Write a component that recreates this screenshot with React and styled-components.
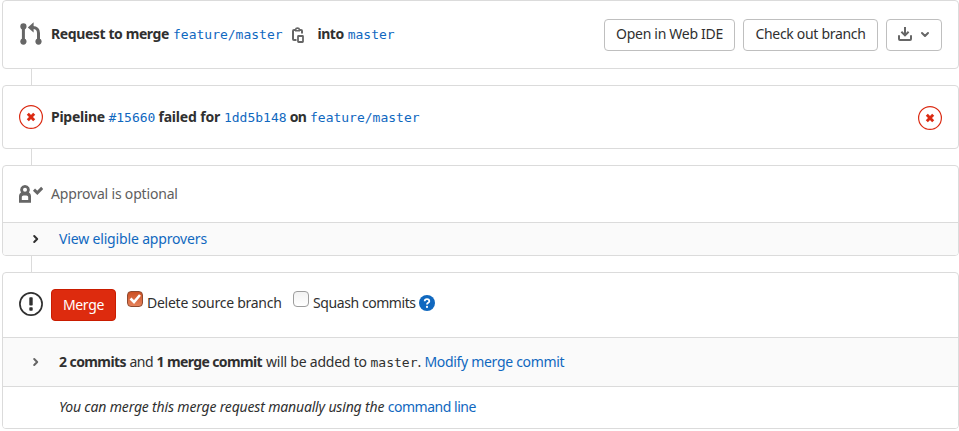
import React from "react";
import styled, { createGlobalStyle, css } from "styled-components";

const GlobalStyle = createGlobalStyle`
  *, *::before, *::after { box-sizing: border-box; }
  body {
    margin: 0;
    background: #fff;
    color: #303030;
    font: 14px/20px "Noto Sans", "Open Sans", sans-serif;
  }
`;

const Widget = styled.main`
  display: flex;
  flex-direction: column;
  width: 959px;
  height: 431px;
  padding-left: 2px;
`;

const Card = styled.section`
  flex: none;
  border: 1px solid #dbdbdb;
  border-radius: 4px;
  overflow: hidden;
`;

const Connector = styled.div`
  flex: none;
  width: 1px;
  height: 16px;
  margin-left: 29px;
  background: #dbdbdb;
`;

const Row = styled.div`
  display: flex;
  align-items: center;
  height: ${(p) => p.$height}px;
  padding: 0 16px;
  white-space: nowrap;
`;

const SubRow = styled(Row)`
  padding-left: 56px;
  padding-bottom: ${(p) => (p.$plain ? 2 : 0)}px;
  border-top: 1px solid #dbdbdb;
  background: ${(p) => (p.$plain ? "#fff" : "#fafafa")};
`;

const ExpandRow = styled(SubRow)`
  padding-left: 25px;
`;

const IconSlot = styled.span`
  display: flex;
  flex: none;
  align-items: center;
  width: ${(p) => p.$width || 32}px;
  padding-bottom: ${(p) => p.$lift || 0}px;
  color: ${(p) => p.$color || "#666"};
`;

const Line = styled.div`
  display: flex;
  align-items: baseline;
`;

const textStyle = css`
  margin-left: ${(p) => p.$gap || 0}px;
  letter-spacing: ${(p) => p.$track || 0}px;
`;

const Text = styled.span`
  ${textStyle}
  color: ${(p) => (p.$muted ? "#5e5e5e" : "inherit")};
`;

const Strong = styled.strong`
  ${textStyle}
  font-weight: 700;
`;

const Title = styled(Strong)`
  padding-bottom: 1px;
  align-self: flex-start;
`;

const Emphasis = styled.em`
  ${textStyle}
`;

const Link = styled.a`
  ${textStyle}
  color: #1068bf;
  text-decoration: none;
`;

const mono = css`
  font-family: "DejaVu Sans Mono", monospace;
  font-size: 13px;
`;

const CodeLink = styled(Link)`
  ${mono}
`;

const Code = styled.code`
  ${textStyle}
  ${mono}
`;

const TitleLine = styled(Line)`
  align-items: center;
  height: 20px;
  margin-bottom: 2px;

  ${CodeLink} {
    padding-top: 2px;
  }
`;

const CopyButton = styled.button`
  display: flex;
  margin: 2px 12px 0 7px;
  padding: 0;
  border: 0;
  background: none;
  color: #666;
`;

const Actions = styled.div`
  display: flex;
  gap: 8px;
  margin-left: auto;
  padding-top: ${(p) => p.$drop || 0}px;
`;

const Button = styled.button`
  display: flex;
  align-items: center;
  justify-content: center;
  width: ${(p) => p.$width}px;
  height: 32px;
  padding: 0 0 1px;
  border: 1px solid #bfbfbf;
  border-radius: 4px;
  background: #fff;
  color: #303030;
  font: inherit;
  letter-spacing: ${(p) => p.$track || 0}px;
`;

const IconButton = styled(Button)`
  gap: 6px;
  padding: 0 0 2px;
  color: #666;
`;

const DangerButton = styled(Button)`
  border-color: #c91c00;
  background: #dd2b0e;
  color: #fff;
`;

const StatusRing = styled.span`
  display: flex;
  flex: none;
  width: 24px;
  height: 24px;
  color: #db2b13;
`;

const Option = styled.label`
  display: flex;
  align-items: center;
  height: 20px;
  margin: 0 0 4px ${(p) => p.$gap}px;
`;

const CheckMark = styled.span`
  display: flex;
  flex: none;
  width: 16px;
  height: 16px;
  margin-top: -8px;
  border: 1px solid ${(p) => (p.$checked ? "#8f4a30" : "#9d9d9d")};
  border-radius: 4px;
  background: ${(p) =>
    p.$checked
      ? "linear-gradient(#cc4f22, #e6835c)"
      : "linear-gradient(#f2f2f2, #fff)"};
`;

const Help = styled.span`
  display: flex;
  margin: 0 0 4px 3px;
  color: #1068bf;
`;

const MergeRequestIcon = () => (
  <svg width="24" height="24" viewBox="0 0 24 24" fill="none" stroke="currentColor">
    <path d="M4.4 5v15M19.5 20v-9c0-3.4-1.9-5.6-5.5-5.6" strokeWidth="3" />
    <g fill="currentColor" stroke="none">
      <circle cx="4.4" cy="4.4" r="3.1" />
      <circle cx="4.4" cy="19.6" r="3.1" />
      <circle cx="19.5" cy="19.6" r="3.1" />
      <path d="M8.8 5.4L14.6.2v10.4z" />
    </g>
  </svg>
);

const CopyIcon = () => (
  <svg width="16" height="16" viewBox="0 0 16 16" fill="none" stroke="currentColor">
    <path d="M6.5 13H4a1 1 0 0 1-1-1V4a1 1 0 0 1 1-1h7a1 1 0 0 1 1 1v2.5" strokeWidth="2" />
    <path d="M5 4.5V2.4C5 1 6 .3 7.5.3S10 1 10 2.4v2.1z" fill="currentColor" stroke="none" />
    <path d="M6.6 2.5h1.8" stroke="#fff" strokeWidth="1" />
    <rect x="8" y="9" width="5" height="6" rx=".5" strokeWidth="1.8" />
  </svg>
);

const DownloadIcon = () => (
  <svg width="16" height="16" viewBox="0 0 16 16" fill="none" stroke="currentColor" strokeWidth="2">
    <path d="M8 1v8M4.4 5.8L8 9.4l3.6-3.6" />
    <path d="M2 10v3c0 .6.4 1 1 1h10c.6 0 1-.4 1-1v-3" strokeLinecap="round" />
  </svg>
);

const ChevronDown = () => (
  <svg width="12" height="12" viewBox="0 0 12 12" fill="none" stroke="currentColor" strokeWidth="2" strokeLinecap="round" strokeLinejoin="round">
    <path d="M3 5l3 3 3-3" />
  </svg>
);

const ChevronRight = () => (
  <svg width="16" height="16" viewBox="0 0 16 16" fill="none" stroke="currentColor" strokeWidth="2" strokeLinecap="round" strokeLinejoin="round">
    <path d="M6.2 5l3 3-3 3" />
  </svg>
);

const FailedIcon = () => (
  <svg width="24" height="24" viewBox="0 0 24 24" fill="none" stroke="currentColor">
    <circle cx="12" cy="12" r="11.4" strokeWidth="1.2" />
    <path d="M8.8 8.8l6.4 6.4M15.2 8.8l-6.4 6.4" strokeWidth="2.9" />
  </svg>
);

const ApprovalIcon = () => (
  <svg width="24" height="24" viewBox="0 0 24 24" fill="none">
    <path
      fill="currentColor"
      fillRule="evenodd"
      d="M6 2.9a4.8 4.8 0 0 1 4 7.5c1.2.8 2 2.2 2 3.8v6.5H0v-6.5c0-1.600.8-3 2-3.800A4.800 4.800 0 0 1 6 2.900zM6 5.700a2 2 0 1 0 0 4 2 2 0 0 0 0-4zM4.600 13.500c-1 0-1.800.8-1.800 1.800v2.600h6.400v-2.600c0-1-.8-1.800-1.800-1.800z"
    />
    <path d="M15 7.600l3.300 3.200L23.200 5.900" stroke="currentColor" strokeWidth="3" />
  </svg>
);

const WarningIcon = () => (
  <svg width="24" height="24" viewBox="0 0 24 24" fill="none" stroke="currentColor">
    <circle cx="12" cy="12" r="11.1" strokeWidth="1.7" />
    <rect x="10.3" y="5.2" width="3.400" height="8.200" rx=".7" fill="currentColor" stroke="none" />
    <rect x="10.3" y="15.300" width="3.400" height="3.400" rx=".7" fill="currentColor" stroke="none" />
  </svg>
);

const TickIcon = () => (
  <svg width="14" height="14" viewBox="0 0 14 14" fill="none" stroke="#fff" strokeWidth="2.6">
    <path d="M2.5 6.500L6 10l6-7" />
  </svg>
);

const HelpIcon = () => (
  <svg width="16" height="16" viewBox="0 0 16 16" fill="none">
    <circle cx="8" cy="8" r="8" fill="currentColor" />
    <path d="M5.700 6.300C5.700 5 6.700 4.200 8 4.200s2.300.8 2.300 2c0 1.700-2.300 1.600-2.300 3.200" stroke="#fff" strokeWidth="1.8" />
    <circle cx="8" cy="11.900" r="1.100" fill="#fff" />
  </svg>
);

export default function App() {
  return (
    <>
      <GlobalStyle />
      <Widget>
        <Card>
          <Row $height={67}>
            <IconSlot $lift={1}><MergeRequestIcon /></IconSlot>
            <TitleLine>
              <Title $track={-0.4}>Request to merge</Title>
              <CodeLink $gap={4}>feature/master</CodeLink>
              <CopyButton aria-label="Copy branch name"><CopyIcon /></CopyButton>
              <Title $track={-0.5}>into</Title>
              <CodeLink $gap={4}>master</CodeLink>
            </TitleLine>
            <Actions>
              <Button $width={131} $track={-0.3}>Open in Web IDE</Button>
              <Button $width={135} $track={-0.31}>Check out branch</Button>
              <IconButton $width={56} aria-label="Download">
                <DownloadIcon />
                <ChevronDown />
              </IconButton>
            </Actions>
          </Row>
        </Card>
        <Connector />
        <Card>
          <Row $height={62}>
            <IconSlot><StatusRing><FailedIcon /></StatusRing></IconSlot>
            <Line>
              <Strong $track={-0.26}>Pipeline</Strong>
              <CodeLink $gap={3.600}>#15660</CodeLink>
              <Strong $gap={3} $track={-0.17}>failed for</Strong>
              <CodeLink $gap={3.800}>1dd5b148</CodeLink>
              <Strong $gap={3.200} $track={-0.8}>on</Strong>
              <CodeLink $gap={4}>feature/master</CodeLink>
            </Line>
            <Actions $drop={2}><StatusRing><FailedIcon /></StatusRing></Actions>
          </Row>
        </Card>
        <Connector />
        <Card>
          <Row $height={56}>
            <IconSlot><ApprovalIcon /></IconSlot>
            <Text $muted $track={-0.18}>Approval is optional</Text>
          </Row>
          <ExpandRow $height={33}>
            <IconSlot $width={31} $color="#303030"><ChevronRight /></IconSlot>
            <Link $track={-0.16}>View eligible approvers</Link>
          </ExpandRow>
        </Card>
        <Connector />
        <Card>
          <Row $height={64}>
            <IconSlot $lift={2} $color="#303030"><WarningIcon /></IconSlot>
            <DangerButton $width={65} $track={-0.3}>Merge</DangerButton>
            <Option $gap={11}>
              <CheckMark $checked><TickIcon /></CheckMark>
              <Text $gap={4} $track={-0.26}>Delete source branch</Text>
            </Option>
            <Option $gap={11}>
              <CheckMark />
              <Text $gap={4.500} $track={-0.43}>Squash commits</Text>
            </Option>
            <Help><HelpIcon /></Help>
          </Row>
          <ExpandRow $height={49}>
            <IconSlot $width={31}><ChevronRight /></IconSlot>
            <Line>
              <Strong $track={-0.58}>2 commits</Strong>
              <Text $gap={3.600} $track={-0.6}>and</Text>
              <Strong $gap={3.600} $track={-0.62}>1 merge commit</Strong>
              <Text $gap={4} $track={-0.23}>will be added to</Text>
              <Code $gap={3.800}>master</Code>
              <Text>.</Text>
              <Link $gap={3.200} $track={-0.31}>Modify merge commit</Link>
            </Line>
          </ExpandRow>
          <SubRow $plain $height={42}>
            <Line>
              <Emphasis $track={-0.17}>You can merge this merge request manually using the</Emphasis>
              <Link $gap={3.600} $track={-0.49}>command line</Link>
            </Line>
          </SubRow>
        </Card>
      </Widget>
    </>
  );
}
